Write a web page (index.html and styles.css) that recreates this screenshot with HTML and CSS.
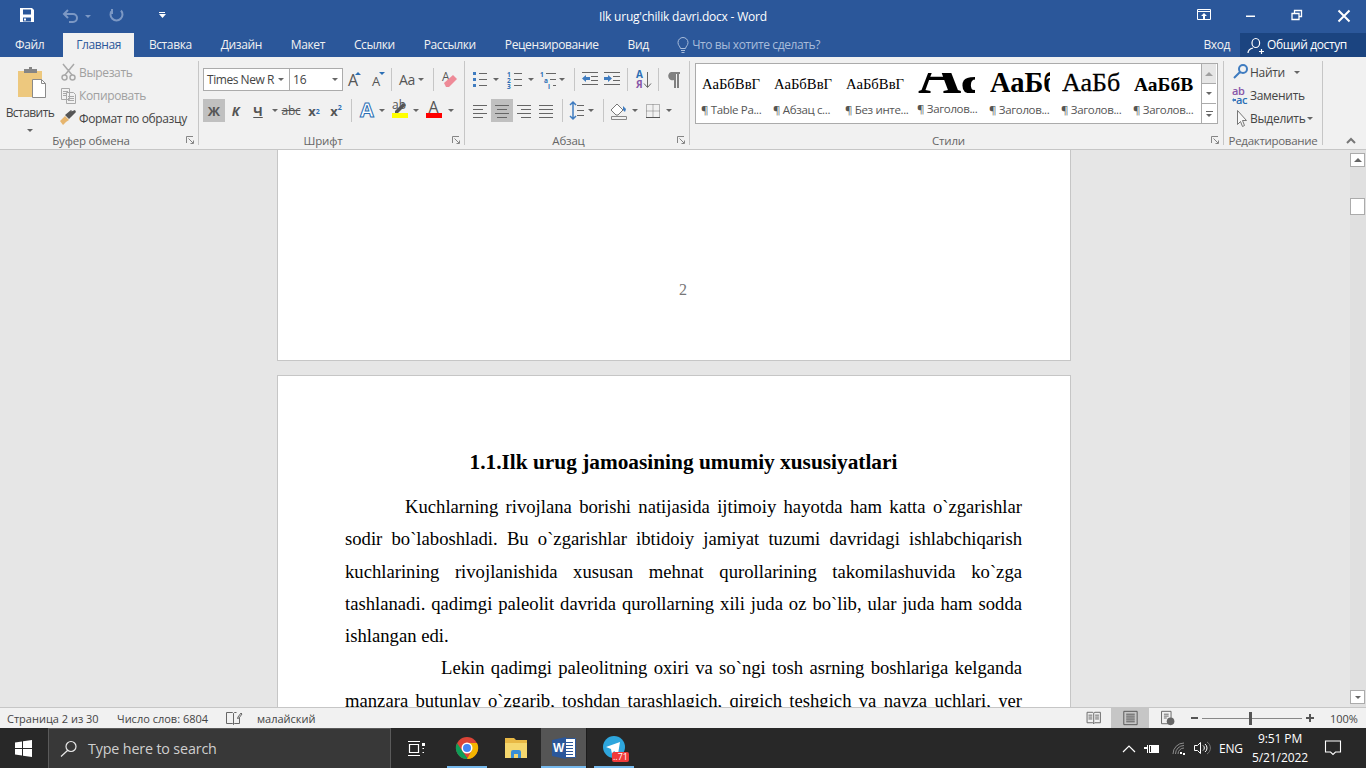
FILE: index.html
```html
<!DOCTYPE html>
<html lang="ru">
<head>
<meta charset="utf-8">
<title>Ilk urug'chilik davri.docx - Word</title>
<link rel="stylesheet" href="styles.css">
</head>
<body>
<div class="app">
  <header class="titlebar">
    <div class="qat">
      <svg width="54" height="33" viewBox="0 0 54 33"><path fill="#fff" fill-rule="evenodd" d="M20 8h12l2 2v12H20zM23 9.500v5h8v-5zM23 17.500v4h8v-4zM24 18.500h2v2h-2z"/></svg>
      <svg class="q-undo" width="24" height="33" viewBox="0 0 24 33"><path fill="none" stroke="#7c98c4" stroke-width="2" d="M11 10l-4 4 4 4M7 14h9a4 4 0 0 1 0 8h-4"/></svg>
      <span class="q-dd"><i class="dd dd-dim"></i></span>
      <svg width="35" height="33" viewBox="0 0 35 33"><path fill="none" stroke="#7c98c4" stroke-width="2" d="M12 10.500a6 6 0 1 0 9 0M12 9v5"/></svg>
      <svg width="40" height="33" viewBox="0 0 40 33"><path fill="#fff" d="M24 12h6v1h-6zM24 14h7l-3.500 4z"/></svg>
    </div>
    <div class="title">Ilk urug'chilik davri.docx - Word</div>
    <div class="winctl">
      <svg width="46" height="33" viewBox="0 0 46 33"><path fill="none" stroke="#fff" d="M15.500 9.500h13v10h-13zM15.500 11.500h13"/><path fill="#fff" d="M22 13l3 3h-2v3h-2v-3h-2z"/></svg>
      <svg width="46" height="33" viewBox="0 0 46 33"><path fill="#fff" d="M18 15.500h9v1.500h-9z"/></svg>
      <svg width="46" height="33" viewBox="0 0 46 33"><path fill="none" stroke="#fff" stroke-width="1.300" d="M18 13.500h7v6h-7zM20.500 13v-2.500h7v6H25"/></svg>
      <svg width="46" height="33" viewBox="0 0 46 33"><path fill="none" stroke="#fff" stroke-width="2" d="M18.500 10.500l11 11M29.500 10.500l-11 11"/></svg>
    </div>
  </header>

  <nav class="tabs">
    <span class="tab tab-file">Файл</span>
    <span class="tab tab-on">Главная</span>
    <span class="tab tab-first">Вставка</span>
    <span class="tab">Дизайн</span>
    <span class="tab">Макет</span>
    <span class="tab">Ссылки</span>
    <span class="tab">Рассылки</span>
    <span class="tab">Рецензирование</span>
    <span class="tab">Вид</span>
    <span class="tell">
      <svg width="14" height="17" viewBox="0 0 14 17"><path fill="none" stroke="#a9bddb" d="M4.500 11.500C4 9 2 8.500 2 5.500a5 5 0 0 1 10 0c0 3-2 3.500-2.500 6zM5 13.500h4M5.500 15.500h3"/></svg>
      Что вы хотите сделать?
    </span>
    <span class="login">Вход</span>
    <span class="share">
      <svg width="17" height="17" viewBox="0 0 17 17"><path fill="none" stroke="#fff" stroke-width="1.200" d="M5 6a3.800 4.500 0 1 0 7.600 0 3.800 4.500 0 1 0-7.600 0M1 16c0-3 3-4.500 5-5M12 14.500h5M14.500 12v5"/></svg>
      Общий доступ
    </span>
  </nav>

  <section class="ribbon">
    <div class="group g-clip">
      <div class="body clip-body">
        <div class="paste">
          <svg width="32" height="36" viewBox="0 0 32 36"><path fill="#edc87e" d="M2 7h24v26H2z"/><path fill="#858585" d="M8 5h5V3h3v2h5v4H8z"/><path fill="#fff" stroke="#8a8a8a" d="M16.500 15.500h9l4 4v14h-13z"/><path fill="none" stroke="#8a8a8a" d="M25.500 15.500v4h4"/></svg>
          <span class="paste-label">Вставить</span>
          <i class="dd dd-paste"></i>
        </div>
        <div class="clip-list">
          <div class="clip-row off"><svg width="17" height="23" viewBox="0 0 17 23"><path fill="none" stroke="#a9a9a9" stroke-width="1.500" d="M3 3l9 11M14 3L5 14M2 16.500a2.500 2.500 0 1 0 5 0 2.500 2.500 0 1 0-5 0M10 16.500a2.500 2.500 0 1 0 5 0 2.500 2.500 0 1 0-5 0"/></svg>Вырезать</div>
          <div class="clip-row off"><svg width="17" height="23" viewBox="0 0 17 23"><path fill="#f1f1f1" stroke="#a9a9a9" d="M1.500 4.500h8v11h-8zM6.500 8.500h7l2 2v9h-9z"/><path stroke="#a9a9a9" d="M3 7.500h5M3 9.500h3M3 11.500h3M8 12.500h6M8 14.500h6M8 16.500h6"/></svg>Копировать</div>
          <div class="clip-row"><svg width="17" height="23" viewBox="0 0 17 23"><path fill="#e6b56e" d="M0 14l5-5 4 4-3 2-3 3z"/><path fill="#555" d="M5 8l6-5 1 1-2 1 5-2 1 2-5 5-2 2z"/></svg>Формат по образцу</div>
        </div>
      </div>
      <div class="glabel l-clip">Буфер обмена</div>
      <svg class="launch" width="9" height="9" viewBox="0 0 9 9"><path fill="none" stroke="#858585" d="M.5 7V.5H7M2.500 2.500l4.500 4.500M4.500 7.500h3v-3"/></svg>
    </div>

    <div class="group g-font">
      <div class="body rows">
        <div class="row">
          <div class="combo">
            <span class="c-font">Times New R<i class="dd dd-in"></i></span>
            <span class="c-size">16<i class="dd dd-in"></i></span>
          </div>
          <svg width="23" height="23" viewBox="0 0 23 23"><text class="sg" x="5" y="18" font-size="16">A</text><path fill="#2b6fb5" d="M12 7l3-3 3 3z"/></svg>
          <svg width="25" height="23" viewBox="0 0 25 23"><text class="sg" x="6" y="18" font-size="13">A</text><path fill="#2b6fb5" d="M13 4h6l-3 3z"/></svg>
          <i class="sep"></i>
          <span class="aa">Aa</span><i class="dd w12"></i>
          <i class="sep sp6"></i>
          <svg width="26" height="23" viewBox="0 0 26 23"><text class="sg" x="8" y="13" font-size="12">A</text><path fill="#ee8a97" d="M10 15l9-8 4 4-8 8h-3z"/></svg>
        </div>
        <div class="row">
          <span class="fb w22 sel">Ж</span>
          <span class="fb fi w21">К</span>
          <span class="fb fu w24">Ч</span>
          <i class="dd w9"></i>
          <span class="fb fs w24">abc</span>
          <span class="fb w22 fx">x<sub>2</sub></span>
          <span class="fb w22 fx">x<sup>2</sup></span>
          <i class="sep sp4"></i>
          <svg width="26" height="23" viewBox="0 0 26 23"><text class="te" x="8" y="18" font-size="20">A</text></svg>
          <i class="dd w8"></i>
          <svg width="22" height="23" viewBox="0 0 22 23"><text class="sg" x="6" y="10" font-size="12">ab</text><path fill="#555" d="M9 12l8-8 3 2-8 8-3 1z"/><path fill="#ffff00" d="M6 14h16v5H6z"/></svg>
          <i class="dd w16"></i>
          <svg width="22" height="23" viewBox="0 0 22 23"><text class="sg" x="4.500" y="13.500" font-size="16">A</text><path fill="#f00" d="M2 14h16v5H2z"/></svg>
          <i class="dd w10"></i>
        </div>
      </div>
      <div class="glabel l-mid">Шрифт</div>
      <svg class="launch" width="9" height="9" viewBox="0 0 9 9"><path fill="none" stroke="#858585" d="M.5 7V.5H7M2.500 2.500l4.500 4.500M4.500 7.500h3v-3"/></svg>
    </div>

    <div class="group g-para">
      <div class="body rows">
        <div class="row">
          <svg width="22" height="23" viewBox="0 0 22 23"><path fill="#3f7cc0" d="M4 4h3v3H4zM4 10h3v3H4zM4 16h3v3H4z"/><path stroke="#666" d="M10 5.500h8M10 11.500h8M10 17.500h8"/></svg>
          <i class="dd w10"></i>
          <svg width="25" height="23" viewBox="0 0 25 23"><text class="nm" x="6" y="8.500">1</text><text class="nm" x="6" y="14.500">2</text><text class="nm" x="6" y="20.500">3</text><path stroke="#666" d="M13 5.500h8M13 11.500h8M13 17.500h8"/></svg>
          <i class="dd w9"></i>
          <svg width="22" height="23" viewBox="0 0 22 23"><text class="nm" x="5" y="8.500">1</text><text class="nm" x="9" y="14.500">a</text><text class="nm" x="13" y="20.500">i</text><path stroke="#666" d="M11 5.500h10M15 11.500h6M18 17.500h3"/></svg>
          <i class="dd w10"></i>
          <i class="sep sp7"></i>
          <svg width="26" height="23" viewBox="0 0 26 23"><path fill="#3f7cc0" d="M7 10.500l4-3.500v2h4v3h-4v2z"/><path stroke="#666" d="M7 4.500h16M16 8.500h7M16 12.500h7M7 16.500h16"/></svg>
          <svg width="26" height="23" viewBox="0 0 26 23"><path fill="#3f7cc0" d="M11 10.500l-4-3.500v2H3v3h4v2z"/><path stroke="#666" d="M3 4.500h16M12 8.500h7M12 12.500h7M3 16.500h16"/></svg>
          <i class="sep"></i>
          <svg width="30" height="23" viewBox="0 0 30 23"><text class="az1" x="8" y="10">A</text><text class="az2" x="8" y="20">Я</text><path fill="none" stroke="#666" d="M19.500 4v15M16 15.500l3.500 4 3.500-4"/></svg>
          <i class="sep"></i>
          <svg width="30" height="23" viewBox="0 0 30 23"><path fill="#808080" d="M12 4h9v2h-1v14h-2V6h-1v14h-2v-8a4 4 0 0 1-3-8z"/></svg>
        </div>
        <div class="row">
          <svg width="22" height="23" viewBox="0 0 22 23"><path stroke="#666" d="M4 6.500h14M4 10.500h10M4 14.500h14M4 18.500h10"/></svg>
          <svg class="sel" width="22" height="23" viewBox="0 0 22 23"><path stroke="#666" d="M4 6.500h14M6 10.500h10M4 14.500h14M6 18.500h10"/></svg>
          <svg width="22" height="23" viewBox="0 0 22 23"><path stroke="#666" d="M4 6.500h14M8 10.500h10M4 14.500h14M8 18.500h10"/></svg>
          <svg width="22" height="23" viewBox="0 0 22 23"><path stroke="#666" d="M4 6.500h14M4 10.500h14M4 14.500h14M4 18.500h14"/></svg>
          <i class="sep sp5"></i>
          <svg width="23" height="23" viewBox="0 0 23 23"><path fill="none" stroke="#3f7cc0" stroke-width="1.500" d="M10 3v17M7 6l3-3 3 3M7 17l3 3 3-3"/><path stroke="#666" d="M14 6.500h7M14 11.500h7M14 16.500h7"/></svg>
          <i class="dd w10"></i>
          <i class="sep sp7"></i>
          <svg width="26" height="23" viewBox="0 0 26 23"><path fill="#fff" stroke="#777" d="M7 11l6-6 6 6-5 5h-2z"/><path fill="#3f7cc0" d="M19 7l3 3-1 3-2-2z"/><path fill="#f1f1f1" stroke="#888" d="M7.500 17.500h15v3h-15z"/></svg>
          <i class="dd w10"></i>
          <svg width="24" height="23" viewBox="0 0 24 23"><path fill="none" stroke="#777" stroke-dasharray="1 1" d="M6.500 5.500h13v13h-13zM6.500 12h13M13 5.500v13"/><path stroke="#555" d="M6 18.500h14"/></svg>
          <i class="dd w10"></i>
        </div>
      </div>
      <div class="glabel l-mid">Абзац</div>
      <svg class="launch" width="9" height="9" viewBox="0 0 9 9"><path fill="none" stroke="#858585" d="M.5 7V.5H7M2.500 2.500l4.500 4.500M4.500 7.500h3v-3"/></svg>
    </div>

    <div class="group g-styles">
      <div class="body b-styles">
        <div class="gallery">
          <div class="st-item"><div class="prev p-n">АаБбВвГ</div><div class="st-name">¶ Table Pa...</div></div>
          <div class="st-item"><div class="prev p-n">АаБбВвГ</div><div class="st-name">¶ Абзац с...</div></div>
          <div class="st-item"><div class="prev p-n">АаБбВвГ</div><div class="st-name">¶ Без инте...</div></div>
          <div class="st-item"><div class="prev p-h1"><span>Аа</span></div><div class="st-name">¶ Заголов...</div></div>
          <div class="st-item"><div class="prev p-h2">АаБб</div><div class="st-name">¶ Заголов...</div></div>
          <div class="st-item"><div class="prev p-h3">АаБб</div><div class="st-name">¶ Заголов...</div></div>
          <div class="st-item"><div class="prev p-h4">АаБбВ</div><div class="st-name">¶ Заголов...</div></div>
          <div class="st-scroll">
            <span class="st-btn st-up"><i class="tri-up"></i></span>
            <span class="st-btn"><i class="dd"></i></span>
            <span class="st-btn st-more"><i class="bar"></i><i class="dd"></i></span>
          </div>
        </div>
      </div>
      <div class="glabel l-mid">Стили</div>
      <svg class="launch" width="9" height="9" viewBox="0 0 9 9"><path fill="none" stroke="#858585" d="M.5 7V.5H7M2.500 2.500l4.500 4.500M4.500 7.500h3v-3"/></svg>
    </div>

    <div class="group g-edit">
      <div class="body edit-list">
        <div class="edit-row"><svg width="19" height="23" viewBox="0 0 19 23"><path fill="none" stroke="#3f7cc0" stroke-width="2" d="M8 8a4 4 0 1 0 8 0 4 4 0 1 0-8 0M9 11l-6 6"/></svg>Найти<i class="dd dd-find"></i></div>
        <div class="edit-row"><svg width="19" height="23" viewBox="0 0 19 23"><text class="ab1" x="1" y="11">ab</text><text class="ab2" x="5" y="20">ac</text><path fill="#3f7cc0" d="M1 16l2-2v1h2v2H3v1z"/></svg>Заменить</div>
        <div class="edit-row"><svg width="19" height="23" viewBox="0 0 19 23"><path fill="#f8f8f8" stroke="#777" d="M6.500 3.500v14l3-3 2 5 2-1-2-5h4z"/></svg>Выделить<i class="dd dd-sel"></i></div>
      </div>
      <div class="glabel l-edit">Редактирование</div>
    </div>
    <svg class="collapse" width="12" height="7" viewBox="0 0 12 7"><path fill="none" stroke="#777" stroke-width="2" d="M2 6l4-4 4 4"/></svg>
  </section>

  <main class="doc">
    <div class="view">
      <article class="page page-a"><div class="pnum">2</div></article>
      <article class="page page-b">
        <h1>1.1.Ilk urug jamoasining umumiy xususiyatlari</h1>
        <p class="p1">Kuchlarning rivojlana borishi natijasida ijtimoiy hayotda ham katta o`zgarishlar sodir bo`laboshladi. Bu o`zgarishlar ibtidoiy jamiyat tuzumi davridagi ishlabchiqarish kuchlarining rivojlanishida xususan mehnat qurollarining takomilashuvida ko`zga tashlanadi. qadimgi paleolit davrida qurollarning xili juda oz bo`lib, ular juda ham sodda ishlangan edi.</p>
        <p class="p2">Lekin qadimgi paleolitning oxiri va so`ngi tosh asrning boshlariga kelganda</p>
        <p class="p3">manzara butunlay o`zgarib, toshdan tarashlagich, qirgich teshgich va nayza uchlari, yer</p>
      </article>
    </div>
    <div class="vscroll">
      <span class="vbtn"><i class="tri-up"></i></span>
      <span class="vthumb"></span>
      <span class="vbtn vdown"><i class="dd"></i></span>
    </div>
  </main>

  <footer class="status">
    <span class="s-page">Страница 2 из 30</span>
    <span class="s-words">Число слов: 6804</span>
    <svg class="s-proof" width="17" height="15" viewBox="0 0 17 15"><path fill="none" stroke="#666" d="M.5 1.500h6l1 1v11l-1-1h-6zM7.500 2.500l1-1h2M7.500 13.500l1-1h5V7M12 6l3-4 1 1-3 4-1.500.5z"/></svg>
    <span class="s-lang">малайский</span>
    <div class="s-right">
      <svg width="26" height="21" viewBox="5 0 26 21"><path fill="none" stroke="#666" d="M6.500 4.500h6l1 1 1-1h6v11h-6l-1 1-1-1h-6zM13.500 5.500v11M8 7.500h4M8 9.500h4M8 11.500h4M15 7.500h4M15 9.500h4M15 11.500h4"/></svg>
      <svg class="s-on" width="38" height="21" viewBox="0 0 38 21"><path fill="none" stroke="#555" d="M12.500 3.500h14v14h-14zM15 6.500h9M15 8.500h9M15 10.500h9M15 12.500h9M15 14.500h9"/></svg>
      <svg width="26" height="21" viewBox="-6 0 26 21"><path fill="none" stroke="#666" d="M6.500 3.500h10v13h-10zM9 6.500h5M9 8.500h5M9 10.500h3"/><circle cx="16" cy="14" r="4" fill="#666"/></svg>
      <span class="z-minus"></span>
      <span class="slider"><i class="knob"></i></span>
      <span class="z-plus"></span>
      <span class="s-zoom">100%</span>
    </div>
  </footer>

  <footer class="taskbar">
    <span class="start"><svg width="17" height="17" viewBox="0 0 17 17"><path fill="#fff" d="M0 2.500l7-1v6.500H0zM8 1.300L17 0v8H8zM0 9h7v6.500l-7-1zM8 9h9v8l-9-1.300z"/></svg></span>
    <div class="search">
      <svg width="17" height="17" viewBox="0 0 17 17"><path fill="none" stroke="#e8e8e8" stroke-width="1.200" d="M6 6.500a5 5 0 1 0 10 0 5 5 0 1 0-10 0M7.500 10.500L1 16.500"/></svg>
      <span>Type here to search</span>
    </div>
    <span class="app-ic a-view"><svg width="18" height="17" viewBox="0 0 18 17"><path fill="none" stroke="#fff" stroke-width="1.200" d="M1 1.500h12M1 15.500h12M2.500 4.500h9v8h-9z"/><path fill="#fff" d="M15 3h3v3h-3zM15.500 8h1.500v1h-1.500zM15.500 12h1.500v1h-1.500z"/></svg></span>
    <span class="app-ic a-run a-chrome"><svg width="24" height="24" viewBox="0 0 24 24"><circle cx="12" cy="12" r="11" fill="#db4437"/><path fill="#0f9d58" d="M12 23A11 11 0 0 1 2 7l6 9 5 7z"/><path fill="#f4b400" d="M12 7h10a11 11 0 0 1-10 16l5-9z"/><circle cx="12" cy="12" r="5.500" fill="#fff"/><circle cx="12" cy="12" r="4" fill="#4285f4"/></svg></span>
    <span class="app-ic a-files"><svg width="24" height="22" viewBox="0 0 24 22"><path fill="#e8b845" d="M1 1h9l2 2h11v18H1z"/><path fill="#f5d76e" d="M1 6h22v15H1z"/><path fill="#3a8fd6" d="M7 21v-6a2 2 0 0 1 2-2h6a2 2 0 0 1 2 2v6h-3v-4h-4v4z"/></svg></span>
    <span class="app-ic a-run a-word"><svg width="24" height="22" viewBox="0 0 24 22"><path fill="#fff" stroke="#2b579a" d="M11.500 1.500h12v19h-12z"/><path stroke="#2b579a" d="M14 5.500h7M14 8.500h7M14 11.500h7M14 14.500h7M14 17.500h7"/><path fill="#2b579a" d="M0 3l14-3v22L0 19z"/></svg><b class="w-w">W</b></span>
    <span class="app-ic a-run a-tg"><svg width="24" height="24" viewBox="0 0 24 24"><circle cx="12" cy="11" r="11" fill="#2ea6dd"/><path fill="#fff" d="M4 11l14-5-2 12-4-3-2 3-1-5z"/></svg><b class="badge">..71</b></span>
    <div class="tray">
      <svg width="14" height="9" viewBox="0 0 14 9"><path fill="none" stroke="#fff" stroke-width="1.200" d="M1 8l6-6 6 6"/></svg>
      <svg class="t-bat" width="16" height="13" viewBox="0 0 16 13"><path fill="#fff" d="M5 3h10v8H5zM0 5h3V3h1v8H3V7H0z"/><path fill="#282828" d="M6 4h1v6H6z"/></svg>
      <svg class="t-wifi" width="14" height="13" viewBox="0 0 14 13"><path fill="none" stroke="#8c8c8c" d="M1 12a11 11 0 0 1 11-11M3.500 12A8.500 8.500 0 0 1 12 3.500M6 12a6 6 0 0 1 6-6"/><path fill="#fff" d="M8 10h2v2H8zM11 11h2v2h-2z"/></svg>
      <svg class="t-vol" width="16" height="14" viewBox="0 0 16 14"><path fill="none" stroke="#fff" d="M.5 4.500h3l3-3v11l-3-3h-3zM9 4.500a3 3 0 0 1 0 5M11 3a5 5 0 0 1 0 8"/><path fill="none" stroke="#777" d="M13 1a7 7 0 0 1 0 12"/></svg>
      <span class="t-lang">ENG</span>
      <span class="clock"><span>9:51 PM</span><span>5/21/2022</span></span>
      <svg class="t-note" width="16" height="16" viewBox="0 0 16 16"><path fill="none" stroke="#fff" stroke-width="1.100" d="M.5 1h15v11h-5l-2.500 2.500L5.500 12H.5z"/></svg>
    </div>
  </footer>
</div>
</body>
</html>
```
FILE: styles.css
```css
* { box-sizing: border-box; }
html, body { margin: 0; padding: 0; height: 100%; overflow: hidden; }
body { font-family: "Open Sans", "Noto Sans", sans-serif; font-size: 12px; color: #444; }
i { font-style: normal; }
svg { display: block; flex: none; overflow: visible; }
svg text { font-family: "Open Sans", sans-serif; }

.app { width: 1366px; height: 768px; display: flex; flex-direction: column; overflow: hidden; background: #f1f1f1; }

/* title bar */
.titlebar { height: 33px; flex: none; background: #2b579a; display: flex; color: #fff; }
.qat { width: 300px; display: flex; }
.q-undo { margin-left: 3px; }
.q-dd { width: 19px; display: flex; align-items: center; justify-content: center; }
.dd-dim { border-top-color: #7c98c4 !important; margin-right: 5px; }
.title { flex: 1; text-align: center; line-height: 33px; font-size: 12px; letter-spacing: -.2px; }
.winctl { width: 300px; display: flex; justify-content: flex-end; }

/* tabs */
.tabs { height: 24px; flex: none; background: #2b579a; display: flex; align-items: stretch; color: #f2f2f2; line-height: 24px; letter-spacing: -.4px; }
.tab { padding: 0 14.500px; white-space: nowrap; }
.tab-file { padding: 0 19px 0 15px; }
.tab-on { background: #f1f1f1; color: #2b579a; padding: 0 13px; }
.tab-first { padding-left: 15px; }
.tell { margin-left: 13px; display: flex; align-items: center; gap: 2px; color: #a9bddb; }
.login { margin-left: auto; padding-right: 10px; }
.share { width: 126px; background: #1b4480; display: flex; align-items: center; gap: 3px; padding-left: 7px; color: #fff; }

/* ribbon */
.ribbon { height: 93px; flex: none; background: #f1f1f1; border-bottom: 1px solid #c6c6c6; display: flex; padding-top: 4px; position: relative; }
.group { height: 84px; border-right: 1px solid #c6c6c6; position: relative; flex: none; }
.body { height: 73px; }
.glabel { height: 11px; line-height: 14px; text-align: center; color: #666; font-size: 11.500px; white-space: nowrap; letter-spacing: -.2px; }
.l-clip { padding-right: 16px; }
.l-mid { padding-right: 21px; }
.l-edit { letter-spacing: -.3px; }
.launch { position: absolute; right: 3px; bottom: 0; }
.collapse { position: absolute; right: 9px; bottom: 5px; }
.g-clip { width: 199px; }
.g-font { width: 266px; padding-left: 4px; }
.g-para { width: 225px; padding-left: 4px; }
.g-styles { width: 534px; padding-left: 5px; }
.g-edit { width: 99px; padding: 0 2px; }

.rows { padding-top: 7px; display: flex; flex-direction: column; gap: 8px; }
.row { height: 23px; display: flex; align-items: stretch; }

.dd { display: block; width: 0; height: 0; border: 3px solid transparent; border-top: 3px solid #666; border-bottom: 0; flex: none; }
.row > .dd { border: 0; position: relative; height: 23px; }
.row > .dd::after { content: ""; position: absolute; left: 50%; top: 10px; margin-left: -3px; border: 3px solid transparent; border-top-color: #666; border-bottom: 0; }
.row > .w8 { width: 8px; } .row > .w9 { width: 9px; } .row > .w10 { width: 10px; } .row > .w12 { width: 12px; } .row > .w16 { width: 16px; }
.w21 { width: 21px; } .w22 { width: 22px; } .w24 { width: 24px; }

.sep { display: block; width: 1px; height: 23px; background: #c6c6c6; flex: none; }
.sp4 { margin-left: 4px; }
.sp5 { margin-left: 5px; }
.sp6 { margin-left: 6px; }
.sp7 { margin-left: 7px; }
.sel { background: #c0c0c0; }

/* clipboard */
.clip-body { display: flex; }
.paste { width: 60px; display: flex; flex-direction: column; align-items: center; padding-top: 3px; }
.paste svg { margin-left: 4px; }
.paste-label { margin-top: 5px; line-height: 16px; letter-spacing: -.55px; }
.dd-paste { margin-top: 8px; }
.clip-list { display: flex; flex-direction: column; }
.clip-row { height: 23px; display: flex; align-items: center; gap: 2px; white-space: nowrap; letter-spacing: -.35px; }
.off { color: #a0a0a0; }

/* font */
.combo { width: 140px; height: 23px; border: 1px solid #ababab; background: #fff; display: flex; color: #444; font-size: 12px; line-height: 21px; letter-spacing: -.45px; }
.c-font { width: 84px; padding-left: 3px; position: relative; white-space: nowrap; overflow: hidden; margin-right: 1px; }
.c-size { flex: 1; padding-left: 3px; position: relative; border-left: 1px solid #ababab; letter-spacing: -.2px; }
.dd-in { position: absolute; right: 4px; top: 9px; }
.sg { fill: #555; }
.aa { width: 23px; text-align: right; font-size: 14px; line-height: 23px; color: #555; letter-spacing: -.3px; }
.fb { display: flex; align-items: center; justify-content: center; font-weight: 700; font-size: 13px; color: #555; flex: none; }
.fi { font-style: italic; }
.fu { text-decoration: underline; }
.fs { text-decoration: line-through; font-weight: 400; font-size: 12px; letter-spacing: -.3px; }
.fx sub { align-self: flex-end; margin-bottom: 7px; font-size: 7px; color: #2b6fb5; line-height: 7px; }
.fx sup { align-self: flex-start; margin-top: 5px; font-size: 7px; color: #2b6fb5; line-height: 7px; }
.te { fill: #fff; stroke: #2b6fb5; stroke-width: 1; font-weight: 700; }
.nm { font-size: 6.500px; font-weight: 700; fill: #2b6fb5; }
.az1 { font-size: 10px; font-weight: 700; fill: #2b6fb5; }
.az2 { font-size: 10px; font-weight: 700; fill: #8756a8; }

/* styles */
.b-styles { padding-top: 2px; }
.gallery { height: 61px; border: 1px solid #ababab; background: #fff; display: flex; width: 523px; }
.st-item { width: 72px; flex: none; padding: 0 6px; }
.prev { height: 37px; font-family: "Liberation Serif", serif; color: #000; white-space: nowrap; overflow: hidden; display: flex; align-items: center; }
.st-name { font-size: 11.500px; color: #555; white-space: nowrap; letter-spacing: -.35px; line-height: 16px; margin-top: 1px; margin-left: -1px; }
.p-n { font-size: 14.700px; padding-top: 3px; }
.p-h1 { font-size: 60px; font-weight: 700; height: 20px; width: 57px; margin: 9px 0 8px; align-items: flex-start; line-height: 20px; }
.p-h1 span { margin-top: -10px; }
.p-h2 { font-size: 28.500px; font-weight: 700; }
.p-h3 { font-size: 26px; -webkit-text-stroke: .3px #000; }
.p-h4 { font-size: 19.500px; font-weight: 700; padding-top: 4px; }
.st-scroll { width: 15px; margin-left: 1px; display: flex; flex-direction: column; border-left: 1px solid #ababab; }
.st-btn { flex: 1; border-bottom: 1px solid #ababab; display: flex; flex-direction: column; align-items: center; justify-content: center; gap: 2px; }
.st-btn:last-child { border-bottom: 0; }
.st-up { background: #e6e6e6; }
.tri-up { display: block; width: 0; height: 0; border: 4px solid transparent; border-bottom: 4px solid #a0a0a0; border-top: 0; }
.bar { display: block; width: 7px; height: 1px; background: #666; }

/* editing */
.edit-list { display: flex; flex-direction: column; padding-left: 5px; }
.edit-row { height: 23px; display: flex; align-items: center; white-space: nowrap; position: relative; letter-spacing: -.3px; }
.dd-find { margin-left: 9px; }
.dd-sel { margin-left: 2px; }
.ab1 { font-size: 11px; font-weight: 600; fill: #8756a8; }
.ab2 { font-size: 11px; font-weight: 600; fill: #2b6fb5; }

/* document */
.doc { flex: 1; min-height: 0; display: flex; background: #e6e6e6; }
.view { flex: 1; min-width: 0; overflow: hidden; padding-left: 277px; }
.page { width: 794px; background: #fff; border: 1px solid #c6c6c6; font-family: "Liberation Serif", serif; color: #000; }
.page-a { height: 211px; border-top: 0; padding-top: 132px; margin-bottom: 14px; }
.pnum { text-align: center; font-size: 16px; line-height: 16px; color: #777; padding-left: 18px; }
.page-b { height: 420px; padding: 70px 48px 0 67px; font-size: 18.670px; line-height: 32.300px; }
.page-b h1 { margin: 0; font-size: 21.330px; line-height: 32px; height: 45px; text-align: center; font-weight: 700; }
.page-b p { margin: 0; text-align: justify; }
.p1 { text-indent: 60px; }
.p2 { text-indent: 96px; text-align-last: justify; }
.p3 { text-align-last: justify; }

.vscroll { width: 16px; flex: none; background: #e0e0e0; display: flex; flex-direction: column; padding: 3px 1px 3px 0; }
.vbtn { height: 14px; background: #fff; border: 1px solid #ababab; display: flex; align-items: center; justify-content: center; flex: none; }
.vbtn .tri-up { border-bottom-color: #666; }
.vthumb { width: 15px; height: 17px; margin-top: 31px; background: #fff; border: 1px solid #ababab; flex: none; }
.vdown { margin-top: auto; }

/* status */
.status { height: 21px; flex: none; background: #f1f1f1; border-top: 1px solid #c6c6c6; display: flex; align-items: center; font-size: 11px; color: #444; white-space: nowrap; }
.s-page { margin-left: 7px; width: 110px; }
.s-words { width: 109px; }
.s-lang { margin-left: 14px; }
.s-right { margin-left: auto; display: flex; align-items: center; height: 20px; }
.s-right svg { height: 20px; }
.s-on { background: #c6c6c6; }
.z-minus { width: 7px; height: 2px; background: #555; margin: 0 4px 0 16px; }
.slider { width: 100px; height: 1px; background: #888; position: relative; }
.knob { position: absolute; left: 47px; top: -6px; width: 3px; height: 13px; background: #555; }
.z-plus { width: 8px; height: 8px; margin: 0 0 0 4px; background: linear-gradient(#555,#555) center/8px 2px no-repeat, linear-gradient(#555,#555) center/2px 8px no-repeat; }
.s-zoom { width: 36px; margin-left: 16px; }

/* taskbar */
.taskbar { height: 40px; flex: none; background: #282828; display: flex; align-items: stretch; color: #fff; }
.start { width: 48px; display: flex; align-items: center; justify-content: center; }
.start svg { margin-left: -2px; }
.search { width: 343px; background: #383838; border: 1px solid #5a5a5a; border-bottom: 0; display: flex; align-items: center; padding-left: 11px; gap: 11px; color: #cfcfcf; font-size: 14.300px; letter-spacing: -.15px; }
.app-ic { width: 48px; display: flex; align-items: center; justify-content: center; position: relative; flex: none; }
.a-view { margin-left: 1px; }
.a-chrome { margin-left: 3px; }
.a-files { margin-left: 1px; }
.a-word { width: 46px; background: #555; margin-left: 1px; border-right: 1px solid #1c1c1c; }
.a-tg { margin-left: 3px; }
.a-run::after { content: ""; position: absolute; left: 4px; right: 4px; bottom: 0; height: 2px; background: #76b9ed; }
.a-word::after { left: 0; right: 0; }
.w-w { position: absolute; left: 12px; top: 13px; color: #fff; font-size: 12px; line-height: 14px; font-family: "Liberation Sans", sans-serif; }
.badge { position: absolute; left: 22px; top: 24px; width: 17px; height: 10px; background: #f03a3a; border-radius: 2px; font-size: 9px; font-weight: 400; line-height: 10px; text-align: center; color: #fff; }
.tray { margin-left: auto; display: flex; align-items: center; font-size: 12px; }
.t-bat { margin-left: 8px; }
.t-wifi { margin-left: 12px; }
.t-vol { margin-left: 8px; }
.t-lang { margin-left: 9px; width: 24px; letter-spacing: -.2px; }
.clock { width: 72px; margin-left: 1px; display: flex; flex-direction: column; align-items: center; line-height: 19px; letter-spacing: -.1px; }
.t-note { margin: 0 25px 0 9px; }
```
